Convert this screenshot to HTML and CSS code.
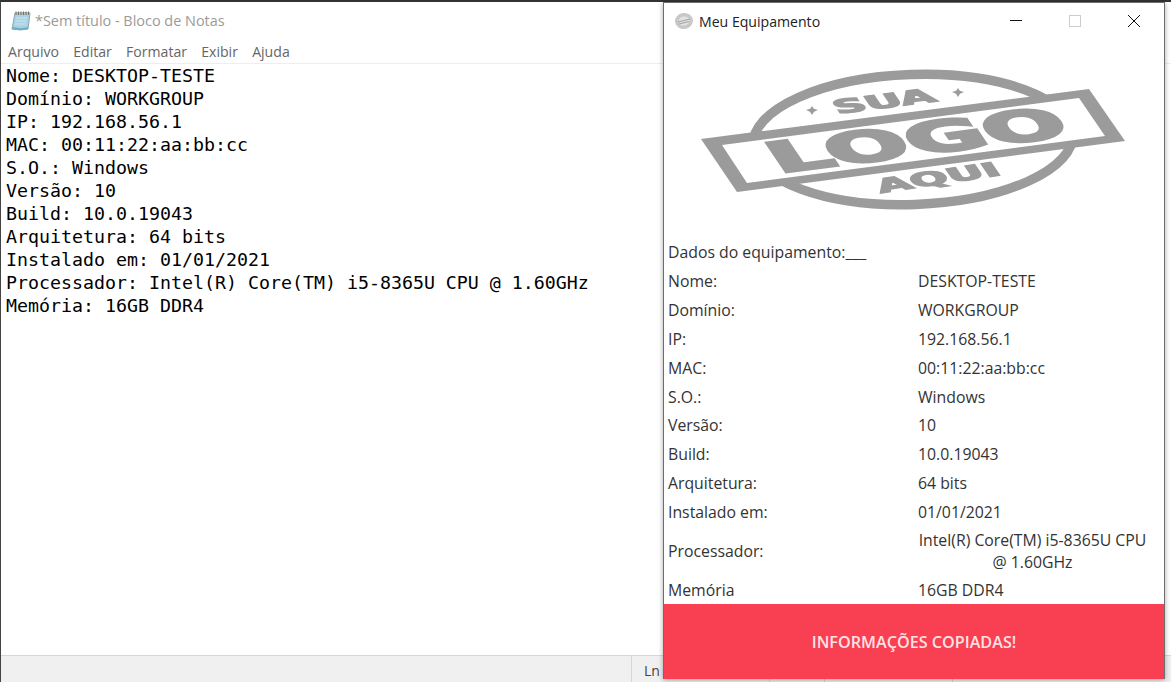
FILE: index.html
```html
<!DOCTYPE html>
<html lang="pt-BR">
<head>
    <meta charset="UTF-8">
    <title>Meu Equipamento</title>
    <link rel="stylesheet" href="styles.css">
</head>
<body>
    <!-- Bloco de Notas -->
    <div class="notepad">
        <div class="np-title">
            <svg class="np-icon" width="20" height="21" viewBox="0 0 20 21">
                <path d="M4 3 L19 3 L17 19 Q10 21 1 19 Z" fill="#a9d3e3" stroke="#7fa9b8" stroke-width="1"/>
                <path d="M2.5 17 Q10 19 17 17 L17 19 Q10 21 1 19 Z" fill="#6fb0c9"/>
                <path d="M4 2 L19 2 L19 5 L4 5 Z" fill="#b9bcbc"/>
                <path d="M5 1.500 V5 M7.500 1.500 V5 M10 1.500 V5 M12.500 1.500 V5 M15 1.500 V5 M17.500 1.500 V5" stroke="#6d7272" stroke-width="1"/>
                <path d="M5 8 H16 M4.600 11 H15.600 M4.200 14 H15.200" stroke="#cfe6ef" stroke-width="1"/>
            </svg>
            <span>*Sem título - Bloco de Notas</span>
        </div>
        <div class="np-menu">
            <span>Arquivo</span>
            <span>Editar</span>
            <span>Formatar</span>
            <span>Exibir</span>
            <span>Ajuda</span>
        </div>
        <pre class="np-text">Nome: DESKTOP-TESTE
Domínio: WORKGROUP
IP: 192.168.56.1
MAC: 00:11:22:aa:bb:cc
S.O.: Windows
Versão: 10
Build: 10.0.19043
Arquitetura: 64 bits
Instalado em: 01/01/2021
Processador: Intel(R) Core(TM) i5-8365U CPU @ 1.60GHz
Memória: 16GB DDR4</pre>
        <div class="np-status">
            <div class="st-cell st-first"></div>
            <div class="st-cell st-ln">Ln</div>
            <div class="st-cell st-b"></div>
            <div class="st-cell st-c"></div>
            <div class="st-cell st-d"></div>
        </div>
    </div>

    <!-- janela do programa -->
    <div class="win">
        <div class="win-title">
            <svg class="win-icon" width="20" height="18" viewBox="0 0 20 18">
                <ellipse cx="10" cy="9" rx="9" ry="8" transform="rotate(-8 10 9)" fill="#c8c8c8"/>
                <ellipse cx="10" cy="9" rx="5.500" ry="4.500" transform="rotate(-8 10 9)" fill="#e2e2e2"/>
                <path d="M4 10 L16 7 M5 12 L15 9.500" stroke="#a5a5a5" stroke-width="1.200"/>
            </svg>
            <span class="win-name">Meu Equipamento</span>
            <div class="win-btns">
                <svg width="12" height="12" viewBox="0 0 12 12"><path d="M0 5.500 H12" stroke="#111" stroke-width="1"/></svg>
                <svg width="12" height="12" viewBox="0 0 12 12"><rect x="0.500" y="0.500" width="11" height="11" fill="none" stroke="#ccc"/></svg>
                <svg width="12" height="12" viewBox="0 0 12 12"><path d="M0 0 L12 12 M12 0 L0 12" stroke="#111" stroke-width="1"/></svg>
            </div>
        </div>

        <div class="logo-box">
            <svg class="logo" width="430" height="146" viewBox="700 66 430 146">
                <ellipse cx="914" cy="138.500" rx="160" ry="65" transform="rotate(-2 914 138.500)" fill="none" stroke="#9b9b9b" stroke-width="9.500"/>
                <path d="M702 138 L1090 88 L1126 140 L738 191 Z" fill="#9b9b9b"/>
                <path d="M723 144 L1080 97 L1106 135 L748 182 Z" fill="#fff"/>
                <path d="M813 105 L814.800 107.800 L819 109 L815 110.800 L813 114 L811 110.800 L807 109 L811.200 107.800 Z" fill="#9b9b9b"/>
                <path d="M959 87 L960.800 89.800 L965 91 L961 92.800 L959 96 L957 92.800 L953 91 L957.200 89.800 Z" fill="#9b9b9b"/>
                <text class="logo-big" transform="matrix(1 -0.129 0.68 1 780 172)" textLength="294" lengthAdjust="spacingAndGlyphs">LOGO</text>
                <text class="logo-small" transform="matrix(1 -0.13 0.68 1 839 113)" textLength="100" lengthAdjust="spacingAndGlyphs">SUA</text>
                <text class="logo-small" transform="matrix(1 -0.15 0.68 1 882 192)" textLength="122" lengthAdjust="spacingAndGlyphs">AQUI</text>
            </svg>
        </div>

        <div class="dados">
            <div class="dados-head">Dados do equipamento:___</div>
            <div class="row"><span>Nome:</span><span>DESKTOP-TESTE</span></div>
            <div class="row"><span>Domínio:</span><span>WORKGROUP</span></div>
            <div class="row"><span>IP:</span><span>192.168.56.1</span></div>
            <div class="row"><span>MAC:</span><span>00:11:22:aa:bb:cc</span></div>
            <div class="row"><span>S.O.:</span><span>Windows</span></div>
            <div class="row"><span>Versão:</span><span>10</span></div>
            <div class="row"><span>Build:</span><span>10.0.19043</span></div>
            <div class="row"><span>Arquitetura:</span><span>64 bits</span></div>
            <div class="row"><span>Instalado em:</span><span>01/01/2021</span></div>
            <div class="row row-proc"><span>Processador:</span><span class="val-proc">Intel(R) Core(TM) i5-8365U CPU<br>@ 1.60GHz</span></div>
            <div class="row"><span>Memória</span><span>16GB DDR4</span></div>
        </div>

        <div class="copiadas">INFORMAÇÕES COPIADAS!</div>
    </div>
</body>
</html>
```

FILE: styles.css
```css
*{
    margin: 0;
    padding: 0;
    box-sizing: border-box;
}
body{
    width: 1171px;
    height: 682px;
    overflow: hidden;
    position: relative;
    background-color: #fff;
    font-family: "Open Sans", "Liberation Sans", sans-serif;
}

/* Bloco de Notas */
.notepad{
    height: 682px;
    display: flex;
    flex-direction: column;
    border-top: 2px solid #333;
    border-left: 1px solid #444;
}
.np-title{
    height: 37px;
    display: flex;
    align-items: center;
    padding-left: 10px;
    gap: 4px;
    font-size: 14.450px;
    color: #9a9a9a;
}
.np-icon{
    flex: none;
    filter: blur(0.3px);
}
.np-menu{
    height: 25px;
    display: flex;
    align-items: center;
    padding-left: 7px;
    gap: 14.200px;
    font-size: 14.100px;
    color: #666;
    border-bottom: 1px solid #eee;
}
.np-text{
    flex: 1;
    padding: 0 0 0 5px;
    font-family: "DejaVu Sans Mono", "Liberation Mono", monospace;
    font-size: 18.270px;
    line-height: 23px;
    color: #000;
}
.np-status{
    height: 27px;
    display: flex;
    background-color: #f0f0f0;
    border-top: 1px solid #d7d7d7;
    font-size: 14px;
    color: #444;
}
.st-cell{
    border-right: 1px solid #d7d7d7;
}
.st-first{
    width: 631px;
}
.st-ln{
    width: 138px;
    padding: 5px 0 0 12px;
}
.st-b{
    width: 55px;
}
.st-c{
    width: 128px;
}
.st-d{
    flex: 1;
    border-right: none;
}

/* janela por cima do bloco de notas */
.win{
    position: absolute;
    left: 663px;
    top: 2px;
    width: 502px;
    height: 677px;
    display: flex;
    flex-direction: column;
    background-color: #fff;
    border: 1px solid #6e6e6e;
    border-bottom: none;
    box-shadow: 0 1px 5px rgba(0, 0, 0, 0.35);
}
.win-title{
    height: 36px;
    flex: none;
    display: flex;
    align-items: center;
    padding-left: 10px;
}
.win-icon{
    flex: none;
    filter: blur(0.5px);
}
.win-name{
    margin-left: 5px;
    font-size: 14.100px;
    color: #222;
}
.win-btns{
    margin-left: auto;
    margin-right: 24px;
    display: flex;
    gap: 47px;
}
.logo-box{
    height: 199px;
    flex: none;
    display: flex;
    justify-content: center;
    padding-top: 28px;
}
.logo{
    flex: none;
    filter: blur(0.4px);
}
.logo-big{
    font-family: "DejaVu Sans", sans-serif;
    font-weight: bold;
    font-size: 40px;
    fill: #9b9b9b;
    stroke: #9b9b9b;
    stroke-width: 2.500px;
}
.logo-small{
    font-family: "DejaVu Sans", sans-serif;
    font-weight: bold;
    font-size: 18px;
    fill: #9b9b9b;
    stroke: #9b9b9b;
    stroke-width: 1.200px;
}
.dados{
    flex: 1;
    padding-left: 4px;
    font-size: 15.800px;
    color: #333;
}
.dados-head{
    height: 29px;
    line-height: 29px;
}
.row{
    height: 28.800px;
    display: grid;
    grid-template-columns: 250px 229px;
    align-items: center;
}
.row-proc{
    height: 49px;
}
.val-proc{
    line-height: 22px;
    text-align: center;
    white-space: nowrap;
}
.copiadas{
    height: 75px;
    flex: none;
    display: flex;
    align-items: center;
    justify-content: center;
    background-color: #f93f52;
    color: #fde3e5;
    font-size: 16.200px;
    font-weight: 600;
}
```
